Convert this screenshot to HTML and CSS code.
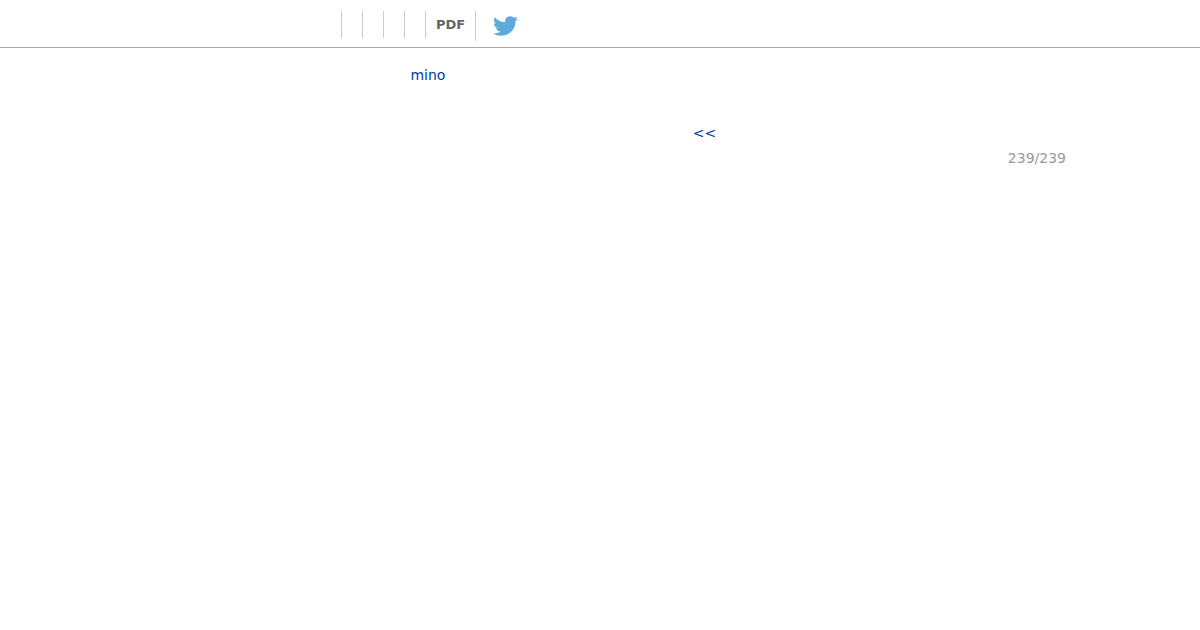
FILE: index.html
```html
<!DOCTYPE html>
<html lang="en">
<head>
    <meta charset="UTF-8">
    <meta name="viewport" content="width=device-width, initial-scale=1.0">
    <title>mino</title>
    <link rel="stylesheet" href="styles.css">
</head>
<body>
    <header class="navbar">
        <ul class="menu">
            <li></li>
            <li></li>
            <li></li>
            <li></li>
            <li></li>
            <li class="pdf"><a href="#">PDF</a></li>
        </ul>
        <a class="twitter" href="#" aria-label="Twitter">
            <svg viewBox="0 0 24 24" width="25" height="24" preserveAspectRatio="none">
                <path d="M23.95 4.57a10 10 0 0 1-2.82.77 4.96 4.96 0 0 0 2.16-2.72c-.95.55-2 .95-3.13 1.18a4.92 4.92 0 0 0-8.38 4.48C7.69 8.1 4.07 6.13 1.64 3.16a4.82 4.82 0 0 0-.67 2.48c0 1.71.87 3.21 2.19 4.1a4.9 4.9 0 0 1-2.23-.62v.06a4.92 4.92 0 0 0 3.95 4.83 5 5 0 0 1-2.21.08 4.94 4.94 0 0 0 4.6 3.42A9.87 9.87 0 0 1 0 19.54a13.99 13.99 0 0 0 7.55 2.21c9.05 0 14-7.5 14-13.98 0-.21 0-.42-.02-.63a9.94 9.94 0 0 0 2.46-2.55z"/>
            </svg>
        </a>
    </header>

    <main class="content">
        <a class="author" href="#">mino</a>
        <div class="pager">
            <a href="#">&lt;&lt;</a>
        </div>
        <p class="page-count">239/239</p>
    </main>
</body>
</html>
```
FILE: styles.css
```css
* {
    box-sizing: border-box;
    margin: 0;
    padding: 0;
}

body {
    font-family: 'DejaVu Sans', sans-serif;
    font-size: 14px;
    line-height: 18px;
    color: #999;
    background-color: #fff;
}

a {
    color: #0039a6;
    text-decoration: none;
}

.navbar {
    display: flex;
    align-items: flex-start;
    height: 48px;
    padding: 11px 0 0 321px;
    border-bottom: 1px solid #aaa;
}

.menu {
    display: flex;
    list-style: none;
}

.menu li {
    width: 21px;
    height: 27px;
    border-right: 1px solid #ccc;
}

.menu .pdf {
    width: 50px;
    height: 30px;
    padding-left: 10px;
    font-size: 13px;
    font-weight: bold;
    line-height: 27px;
}

.pdf a {
    color: #666;
}

.twitter {
    margin: 3px 0 0 17px;
}

.twitter svg {
    display: block;
    fill: #5ea9dd;
}

.content {
    width: 656px;
    margin-left: 410px;
    padding-top: 18px;
}

.author {
    display: block;
    padding-left: 0.4px;
}

.pager {
    margin-top: 40px;
    padding-left: 282.8px;
}

.page-count {
    margin-top: 7px;
    text-align: right;
}
```
